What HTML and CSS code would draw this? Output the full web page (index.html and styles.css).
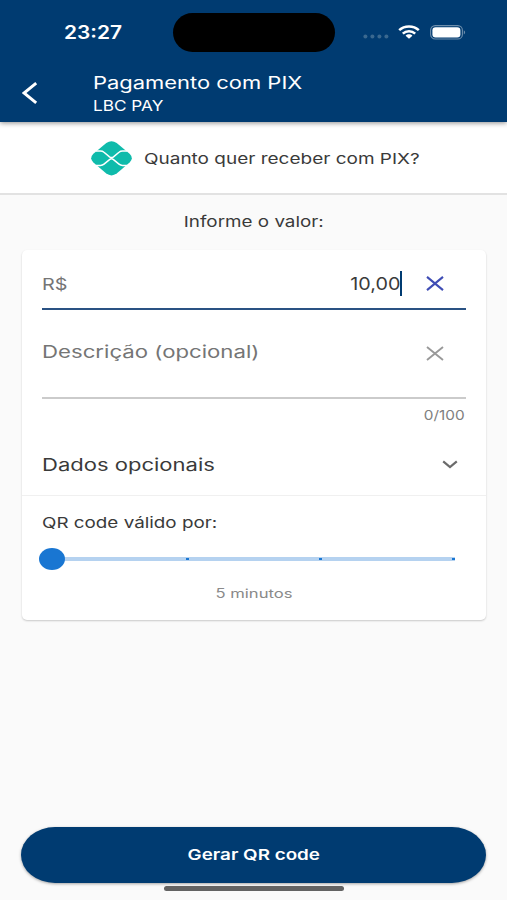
FILE: index.html
```html
<!DOCTYPE html>
<html lang="pt-BR">
<head>
  <meta charset="UTF-8">
  <meta name="viewport" content="width=device-width, initial-scale=1.0">
  <title>Pagamento com PIX</title>
  <link rel="stylesheet" href="styles.css">
</head>
<body>
  <header>
    <div class="status-bar">
      <div class="clock"><span class="wide">23:27</span></div>
      <div class="island"></div>
      <div class="status-icons">
        <svg class="signal" width="26" height="5" viewBox="0 0 26 5" fill="#3a688f">
          <ellipse cx="2.4" cy="2.5" rx="2" ry="1.9"/>
          <ellipse cx="9.4" cy="2.5" rx="2" ry="1.9"/>
          <ellipse cx="16.4" cy="2.5" rx="2" ry="1.9"/>
          <ellipse cx="23.4" cy="2.5" rx="2" ry="1.9"/>
        </svg>
        <svg class="wifi" width="22" height="14" viewBox="0 0 22 14" fill="none" stroke="#fff" stroke-width="2.5">
          <path d="M1.2 5.2C6.5 0.1 15.5 0.1 20.8 5.2"/>
          <path d="M4.8 8.6C8.3 5.3 13.7 5.3 17.2 8.6"/>
          <path d="M7.6 10.7C9.4 8.9 12.6 8.9 14.4 10.7L11 13.7Z" fill="#fff" stroke="none"/>
        </svg>
        <svg class="battery" width="36" height="15" viewBox="0 0 36 15">
          <rect x="0.6" y="0.6" width="31.8" height="13.4" rx="4.6" fill="none" stroke="#6d8eac" stroke-width="1.1"/>
          <rect x="2.4" y="2.2" width="28" height="10.2" rx="3.2" fill="#fff"/>
          <path d="M33.8 5.2C35.6 6 35.6 8.6 33.8 9.4Z" fill="#6d8eac"/>
        </svg>
      </div>
    </div>
    <div class="app-bar">
      <svg class="back" width="16" height="22" viewBox="0 0 16 22" fill="none" stroke="#fff" stroke-width="3">
        <path d="M14.2 1.2L2 11L14.2 20.8"/>
      </svg>
      <div class="titles">
        <h1><span class="wide">Pagamento com PIX</span></h1>
        <p><span class="wide">LBC PAY</span></p>
      </div>
    </div>
  </header>

  <section class="question">
    <svg width="41" height="35" viewBox="0 0 41 35">
      <path d="M15.3 2Q20.5 -1.6 25.7 2L38.6 12.8Q43 17.2 38.6 21.6L25.7 32.6Q20.5 36.2 15.3 32.6L2.4 21.6Q-2 17.2 2.4 12.8Z" fill="#0fbbab"/>
      <path d="M5 10H9.5Q11.5 10 13 11.3L18.5 15.8Q20.5 17.3 22.5 15.8L28 11.3Q29.5 10 31.5 10H36" fill="none" stroke="#fff" stroke-width="1.5"/>
      <path d="M5 24.4H9.5Q11.5 24.4 13 23.1L18.5 18.6Q20.5 17.1 22.5 18.6L28 23.1Q29.5 24.4 31.5 24.4H36" fill="none" stroke="#fff" stroke-width="1.5"/>
    </svg>
    <h2><span class="wide">Quanto quer receber com PIX?</span></h2>
  </section>

  <main>
    <p class="hint"><span class="wide">Informe o valor:</span></p>

    <div class="card">
      <div class="field amount">
        <span class="prefix"><span class="wide">R$</span></span>
        <span class="value"><span class="wide">10,00</span></span>
        <span class="caret"></span>
        <svg class="clear" width="18" height="15" viewBox="0 0 18 15" fill="none" stroke="#3f4db5" stroke-width="2.1">
          <path d="M1 0.9L17 14.1M17 0.9L1 14.1"/>
        </svg>
      </div>

      <div class="field description">
        <span class="label"><span class="wide">Descrição (opcional)</span></span>
        <svg class="clear" width="18" height="15" viewBox="0 0 18 15" fill="none" stroke="#999" stroke-width="1.9">
          <path d="M1 0.9L17 14.1M17 0.9L1 14.1"/>
        </svg>
      </div>
      <p class="counter"><span class="wide">0/100</span></p>

      <div class="optional">
        <h3><span class="wide">Dados opcionais</span></h3>
        <svg width="16" height="9" viewBox="0 0 16 9" fill="none" stroke="#6b6b6b" stroke-width="2.2">
          <path d="M1.2 1.4L8 7L14.8 1.4"/>
        </svg>
      </div>

      <div class="validity">
        <h4><span class="wide">QR code válido por:</span></h4>
        <div class="slider">
          <span class="thumb"></span>
          <span class="tick"></span>
          <span class="tick"></span>
          <span class="tick"></span>
        </div>
        <p class="duration"><span class="wide">5 minutos</span></p>
      </div>
    </div>
  </main>

  <footer>
    <button type="button"><span class="wide">Gerar QR code</span></button>
    <div class="home-indicator"></div>
  </footer>
</body>
</html>
```

FILE: styles.css
```css
* {
  box-sizing: border-box;
}
body {
  font-family: Inter, "Open Sans", sans-serif;
  margin: 0;
  height: 900px;
  display: flex;
  flex-direction: column;
  overflow: hidden;
  background-color: #fafafa;
  color: #3a3a3a;
}
h1, h2, h3, h4, p {
  margin: 0;
  font-weight: 400;
}
svg {
  display: block;
  flex: none;
}
/* letterforms are drawn wider than the font's own */
.wide {
  display: inline-block;
  white-space: nowrap;
  transform: scaleX(1.2);
  transform-origin: left center;
}

header {
  height: 122px;
  flex: none;
  background-color: #003b71;
  color: #fff;
  box-shadow: 0 1px 5px rgba(0, 0, 0, 0.45);
  position: relative;
}
.status-bar {
  height: 64px;
  display: grid;
  grid-template-columns: 173px 162px 1fr;
  align-items: center;
}
.clock {
  padding: 1px 0 0 64px;
  font-size: 18px;
  font-weight: 600;
  line-height: 24px;
}
.clock .wide {
  transform: scaleX(1.16);
}
.island {
  height: 39px;
  border-radius: 20px;
  background-color: #000;
}
.status-icons {
  display: flex;
  align-items: center;
  padding-left: 28px;
}
.signal {
  margin-top: 9px;
}
.wifi {
  margin-left: 9px;
}
.battery {
  margin-left: 10px;
}
.app-bar {
  display: flex;
  padding: 7px 0 0 22px;
}
.back {
  margin-top: 11px;
}
.titles {
  margin-left: 55px;
}
h1 {
  font-size: 17px;
  line-height: 24px;
}
h1 .wide {
  transform: scaleX(1.29);
}
.titles p {
  font-size: 14.7px;
  line-height: 22px;
}
.titles p .wide {
  transform: scaleX(1.17);
}

.question {
  height: 73px;
  flex: none;
  display: flex;
  align-items: center;
  padding: 1px 0 0 91px;
  background-color: #fff;
  border-bottom: 2px solid #e2e2e2;
}
.question h2 {
  margin-left: 12px;
  font-size: 15px;
}
.question .wide {
  transform: scaleX(1.265);
}

main {
  flex: 1;
  padding: 0 21px 0 22px;
}
.hint {
  height: 55px;
  padding-top: 16px;
  font-size: 15px;
  line-height: 22px;
  text-align: center;
}
.hint .wide, .duration .wide, button .wide {
  transform: scaleX(1.255);
  transform-origin: center;
}
.card {
  height: 370px;
  background-color: #fff;
  border-radius: 5px;
  box-shadow: 0 1px 2px rgba(0, 0, 0, 0.2);
}
.field {
  margin: 0 20px;
  display: flex;
}
.amount {
  height: 60px;
  padding: 9px 22px 0 0;
  align-items: center;
  border-bottom: 2px solid #2a5283;
}
.prefix {
  flex: 1;
  font-size: 16.5px;
  color: #757575;
}
.value {
  font-size: 17.5px;
}
.value .wide {
  transform: scaleX(1.13);
  transform-origin: right center;
}
.caret {
  width: 2px;
  height: 25px;
  background-color: #003b71;
}
.amount .clear {
  margin-left: 24px;
}
.description {
  height: 89px;
  padding: 30px 22px 0 0;
  justify-content: space-between;
  border-bottom: 2px solid #cbcbcb;
}
.label {
  font-size: 17px;
  line-height: 24px;
  color: #757575;
}
.label .wide {
  transform: scaleX(1.305);
}
.description .clear {
  margin-top: 6px;
}
.counter {
  height: 34px;
  padding: 6px 21px 0 0;
  font-size: 13px;
  line-height: 20px;
  text-align: right;
  color: #808080;
}
.counter .wide {
  transform: scaleX(1.18);
  transform-origin: right center;
}
.optional {
  height: 63px;
  display: flex;
  justify-content: space-between;
  align-items: center;
  padding: 1px 28px 0 20px;
  border-bottom: 1px solid #f0f0f0;
}
h3 {
  font-size: 17px;
}
h3 .wide {
  transform: scaleX(1.295);
}
.validity {
  padding: 16px 0 0 20px;
}
h4 {
  font-size: 15px;
  line-height: 22px;
}
h4 .wide {
  transform: scaleX(1.255);
}
.slider {
  width: 413px;
  height: 4px;
  margin-top: 23px;
  display: flex;
  align-items: center;
  justify-content: space-between;
  background-color: #b5d2f0;
}
.thumb {
  width: 26px;
  height: 22px;
  margin: 0 -9px 0 -3px;
  border-radius: 50%;
  background-color: #1976d2;
  flex: none;
}
.tick {
  width: 3px;
  height: 2px;
  background-color: #1976d2;
}
.duration {
  margin-top: 23px;
  padding-right: 21px;
  font-size: 12.5px;
  line-height: 20px;
  text-align: center;
  color: #8a8a8a;
}
.duration .wide {
  transform: scaleX(1.33);
}

footer {
  height: 73px;
  flex: none;
  padding: 0 21px;
}
button {
  display: block;
  width: 100%;
  height: 56px;
  padding: 0 0 1px;
  border: none;
  border-radius: 34px / 28px;
  background-color: #003b71;
  color: #fff;
  font-family: inherit;
  font-size: 15px;
  font-weight: 600;
  box-shadow: 0 1px 3px rgba(0, 0, 0, 0.35);
  cursor: pointer;
}
.home-indicator {
  width: 180px;
  height: 5px;
  margin: 3px auto 0;
  border-radius: 3px;
  background-color: #636363;
}
```
